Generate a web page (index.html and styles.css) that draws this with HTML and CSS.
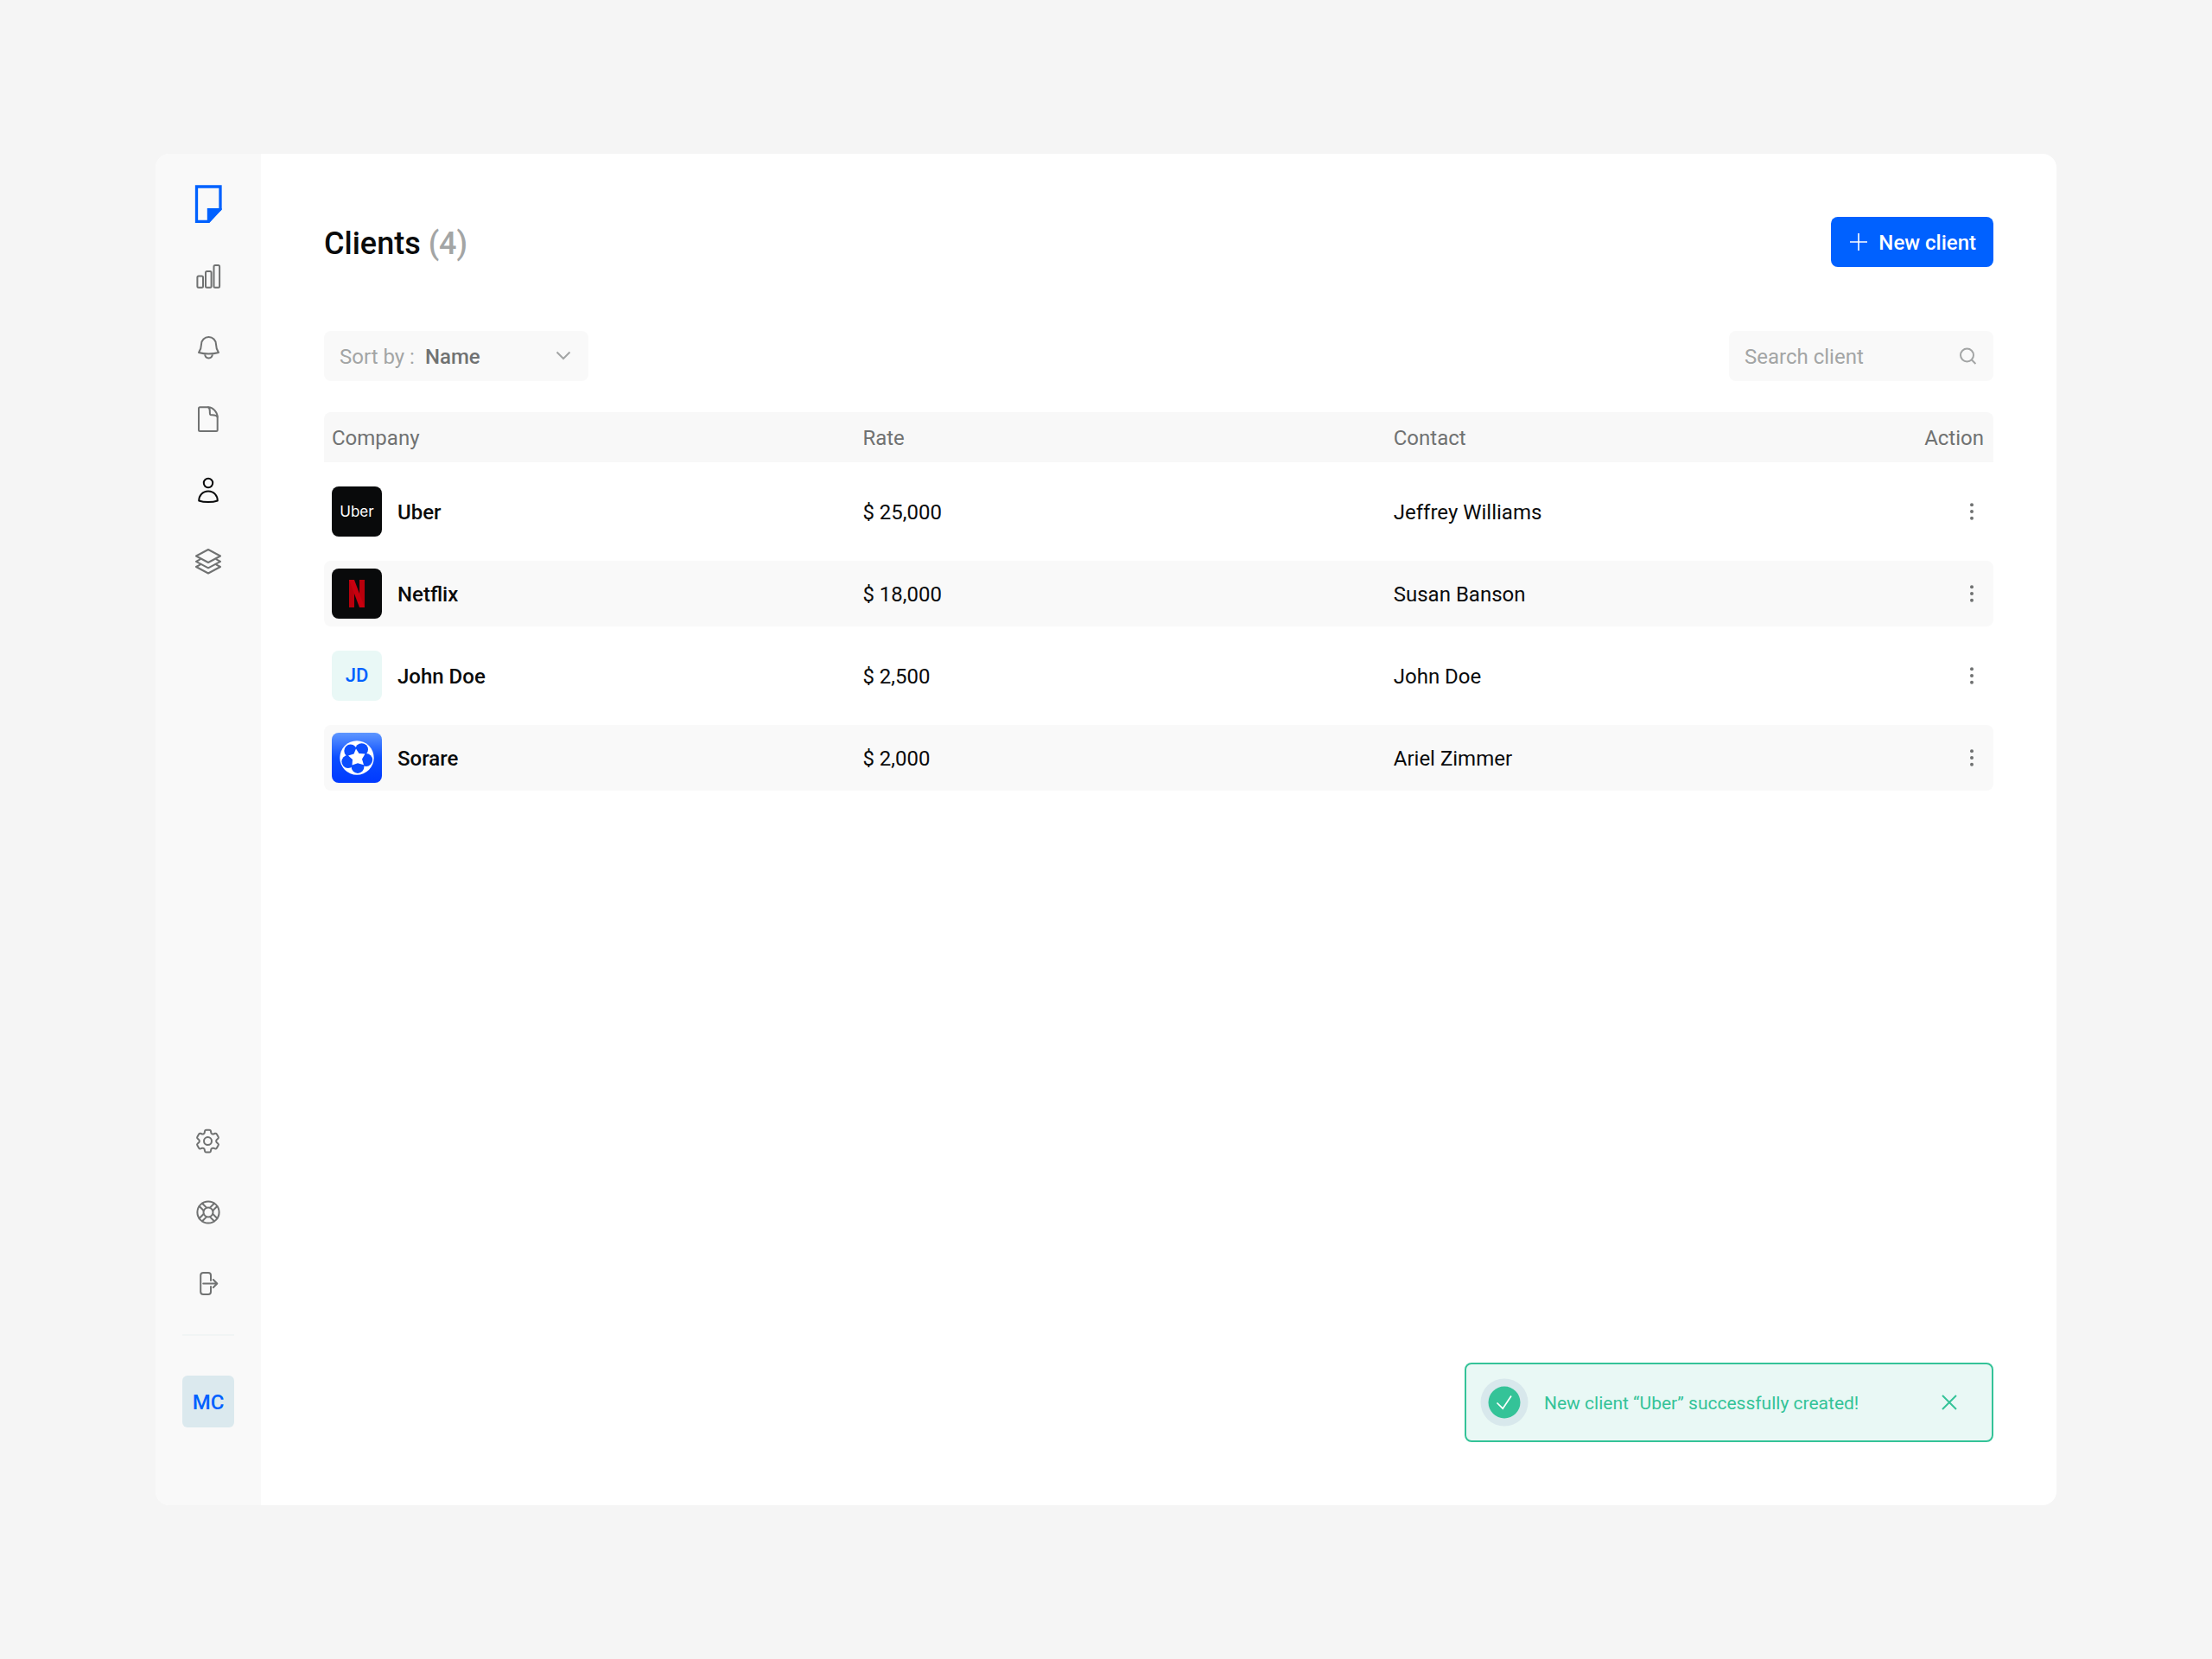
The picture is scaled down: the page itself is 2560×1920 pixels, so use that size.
FILE: index.html
```html
<!DOCTYPE html>
<html lang="en">
<head>
<meta charset="utf-8">
<meta name="viewport" content="width=device-width, initial-scale=1">
<title>Clients</title>
<link rel="stylesheet" href="styles.css">
</head>
<body>
<div class="app">
  <aside class="sidebar">
    <a class="logo" href="#" aria-label="Home">
      <svg width="32" height="44" viewBox="0 0 32 44"><path d="M2.500 2h27.500v26L16.500 42.300h-14z" fill="none" stroke="#0061ff" stroke-width="3.300"/><path d="M14.800 27H31.500v1.500L17 44h-2.200z" fill="#0061ff"/></svg>
    </a>
    <nav class="nav" aria-label="Main">
      <a href="#" aria-label="Statistics"><svg class="icon" viewBox="0 0 32 32"><rect x="3.400" y="14.600" width="6.600" height="13.200" rx="1.500"/><rect x="13" y="9" width="6.600" height="18.800" rx="1.500"/><rect x="22.500" y="2" width="6.600" height="25.800" rx="1.500"/></svg></a>
      <a href="#" aria-label="Notifications"><svg class="icon" viewBox="0 0 32 32"><path d="M16.500 3A8.500 8.500 0 0 0 8 11.500c0 4.500-1 6.500-3 9.500 3.500 1 7.500 1.500 11.500 1.500s8-.5 11.500-1.500c-2-3-3-5-3-9.500A8.500 8.500 0 0 0 16.500 3zM12 22.500c.3 3.400 2 5 4.500 5s4.200-1.600 4.500-5"/></svg></a>
      <a href="#" aria-label="Documents"><svg class="icon" viewBox="0 0 32 32"><path d="M6.500 2.200H16c5.500 0 10.700 5.800 10.700 11.500v14.800c0 .9-.6 1.500-1.500 1.500H6.500c-.9 0-1.500-.6-1.500-1.500V3.700c0-.9.600-1.500 1.500-1.500z"/><path d="M16 2.300c1.800.9 1.800 2.700 1.800 4.200 0 4 0 4.700 2 4.700 3.200 0 5.600-.2 6.800 2.300"/></svg></a>
      <a class="active" href="#" aria-label="Clients" aria-current="page"><svg class="icon" viewBox="0 0 32 32"><circle cx="16" cy="8" r="5.200"/><path d="M5.200 28.500c0-5.500 4-11 10.800-11s10.800 5.500 10.800 11c-6 2.100-15.600 2.100-21.600 0z"/></svg></a>
      <a href="#" aria-label="Projects"><svg class="icon" viewBox="0 0 32 32"><path d="M16 3l14 7.500L16 18 2 10.500zM6.500 14.300L2 16.800l14 7.500 14-7.500-4.500-2.500M6.500 20.600L2 23l14 7.500L30 23l-4.500-2.400"/></svg></a>
    </nav>
    <nav class="nav nav-bottom" aria-label="Account">
      <a href="#" aria-label="Settings"><svg class="icon" viewBox="0 0 32 32"><g transform="translate(-1.780 -1.680) scale(1.440)"><path stroke-width="1.390" d="M9.594 3.940c.09-.542.56-.94 1.110-.94h2.593c.55 0 1.020.398 1.110.94l.213 1.281c.063.374.313.686.645.87.074.04.147.083.22.127.325.196.72.257 1.075.124l1.217-.456a1.125 1.125 0 0 1 1.370.49l1.296 2.247a1.125 1.125 0 0 1-.26 1.431l-1.003.827c-.293.241-.438.613-.43.992a7.723 7.723 0 0 1 0 .255c-.008.378.137.75.43.991l1.004.827c.424.35.534.955.26 1.430l-1.298 2.247a1.125 1.125 0 0 1-1.369.491l-1.217-.456c-.355-.133-.75-.072-1.076.124a6.470 6.470 0 0 1-.22.128c-.331.183-.581.495-.644.869l-.213 1.281c-.09.543-.56.94-1.110.94h-2.594c-.55 0-1.019-.398-1.110-.94l-.213-1.281c-.062-.374-.312-.686-.644-.87a6.520 6.520 0 0 1-.22-.127c-.325-.196-.72-.257-1.076-.124l-1.217.456a1.125 1.125 0 0 1-1.369-.49l-1.297-2.247a1.125 1.125 0 0 1 .26-1.431l1.004-.827c.292-.24.437-.613.43-.991a6.932 6.932 0 0 1 0-.255c.007-.38-.138-.751-.43-.992l-1.004-.827a1.125 1.125 0 0 1-.26-1.430l1.297-2.247a1.125 1.125 0 0 1 1.370-.491l1.216.456c.356.133.751.072 1.076-.124.072-.044.146-.086.22-.128.332-.183.582-.495.644-.869l.214-1.280z"/></g><circle cx="15.500" cy="15.600" r="4.500"/></svg></a>
      <a href="#" aria-label="Help"><svg class="icon" viewBox="-16 -16 32 32"><circle r="12.600"/><circle r="5.500"/><path d="M-2.400-5.200v-7M2.400-5.200v-7" transform="rotate(45)"/><path d="M-2.400-5.200v-7M2.400-5.200v-7" transform="rotate(135)"/><path d="M-2.400-5.200v-7M2.400-5.200v-7" transform="rotate(225)"/><path d="M-2.400-5.200v-7M2.400-5.200v-7" transform="rotate(315)"/></svg></a>
      <a href="#" aria-label="Log out"><svg class="icon" viewBox="0 0 32 32"><path d="M19 13V7c0-1.700-1.300-3-3-3h-5.800c-1.700 0-3 1.300-3 3v19c0 1.700 1.300 3 3 3H16c1.700 0 3-1.300 3-3v-6M10.200 16.500h16M21.800 12l4.500 4.500-4.500 4.500"/></svg></a>
    </nav>
    <hr class="divider">
    <button class="profile" type="button">MC</button>
  </aside>

  <main class="main">
    <header class="header">
      <h1 class="title">Clients <span class="count">(4)</span></h1>
      <button class="new-client" type="button">
        <svg width="20" height="20" viewBox="0 0 20 20"><path d="M10 0v20M0 10h20" stroke="#fff" stroke-width="1.600"/></svg>
        <span class="label">New client</span>
      </button>
    </header>

    <div class="toolbar">
      <div class="field">
        <label for="sort">Sort by :</label>
        <select class="sort" id="sort"><option>Name</option><option>Rate</option><option>Contact</option></select>
        <svg width="18" height="12" viewBox="0 0 18 12"><path d="M1.500 1.500L9 9l7.500-7.500"/></svg>
      </div>
      <div class="field">
        <input class="search" type="search" placeholder="Search client" aria-label="Search client">
        <svg width="20" height="20" viewBox="0 0 20 20"><circle cx="9.500" cy="9" r="7.500"/><path d="M14.700 14.300l4.700 4.700"/></svg>
      </div>
    </div>

    <table class="clients">
      <thead>
        <tr><th class="col">Company</th><th class="col">Rate</th><th class="col">Contact</th><th class="action">Action</th></tr>
      </thead>
      <tbody>
        <tr>
          <td><div class="company"><span class="tile tile-uber">Uber</span><span class="label">Uber</span></div></td>
          <td class="text">$ 25,000</td><td class="text">Jeffrey Williams</td>
          <td class="action"><button class="more" type="button" aria-label="Actions for Uber"><svg width="6" height="20" viewBox="0 0 6 20"><circle cx="3" cy="2.300" r="2"/><circle cx="3" cy="10" r="2"/><circle cx="3" cy="17.700" r="2"/></svg></button></td>
        </tr>
        <tr>
          <td><div class="company"><span class="tile tile-netflix"><svg width="18" height="32" viewBox="0 0 18 32"><path d="M0 0h6v32H0zM12 0h6v32h-6z" fill="#b8000c"/><path d="M0 0h6l12 32h-6z" fill="#c8000f"/></svg></span><span class="label">Netflix</span></div></td>
          <td class="text">$ 18,000</td><td class="text">Susan Banson</td>
          <td class="action"><button class="more" type="button" aria-label="Actions for Netflix"><svg width="6" height="20" viewBox="0 0 6 20"><circle cx="3" cy="2.300" r="2"/><circle cx="3" cy="10" r="2"/><circle cx="3" cy="17.700" r="2"/></svg></button></td>
        </tr>
        <tr>
          <td><div class="company"><span class="tile tile-jd">JD</span><span class="label">John Doe</span></div></td>
          <td class="text">$ 2,500</td><td class="text">John Doe</td>
          <td class="action"><button class="more" type="button" aria-label="Actions for John Doe"><svg width="6" height="20" viewBox="0 0 6 20"><circle cx="3" cy="2.300" r="2"/><circle cx="3" cy="10" r="2"/><circle cx="3" cy="17.700" r="2"/></svg></button></td>
        </tr>
        <tr>
          <td><div class="company"><span class="tile tile-sorare"><svg width="40" height="40" viewBox="-20 -20 40 40"><circle r="19.700" fill="#fff"/><g fill="#0a4dff"><circle r="7.400" cx="5.600" cy="-9.400"/><circle r="7.400" cx="10.700" cy="2.500"/><circle r="7.400" cx="1" cy="10.600"/><circle r="7.400" cx="-10.200" cy="4.500"/><circle r="7.400" cx="-7.300" cy="-8.100"/></g><path fill="#fff" d="M-1-10.500L2.500-5 9.500-4.500 6 1.500 8 8.200 1 6.300-5.500 8.500-5 2-10-2.500-3.500-4.500z"/></svg></span><span class="label">Sorare</span></div></td>
          <td class="text">$ 2,000</td><td class="text">Ariel Zimmer</td>
          <td class="action"><button class="more" type="button" aria-label="Actions for Sorare"><svg width="6" height="20" viewBox="0 0 6 20"><circle cx="3" cy="2.300" r="2"/><circle cx="3" cy="10" r="2"/><circle cx="3" cy="17.700" r="2"/></svg></button></td>
        </tr>
      </tbody>
    </table>

    <div class="toast" role="status">
      <svg width="56" height="56" viewBox="0 0 56 56"><circle cx="28" cy="28" r="27.500" fill="#d8e8ec"/><circle cx="28" cy="28" r="18.500" fill="#34c398"/><path d="M19.500 28.500l6.700 6.700L36 20.500" fill="none" stroke="#fff" stroke-width="1.700"/></svg>
      <p class="toast-text">New client “Uber” successfully created!</p>
      <button class="toast-close" type="button" aria-label="Dismiss"><svg width="18" height="18" viewBox="0 0 18 18"><path d="M1 1l16 16M17 1L1 17" stroke="#34c398" stroke-width="2"/></svg></button>
    </div>
  </main>
</div>
</body>
</html>
```
FILE: styles.css
```css
* {
  box-sizing: border-box;
}

body {
  margin: 0;
  padding: 178px 180px;
  background: #f5f5f5;
  color: #0a0b0c;
  font: 400 24px/28px Roboto, "Liberation Sans", sans-serif;
}

button,
input,
select {
  margin: 0;
  padding: 0;
  border: 0;
  background: none;
  color: inherit;
  font: inherit;
}

svg {
  display: block;
  flex: none;
}

.app {
  display: flex;
  min-height: calc(100vh - 356px);
  border-radius: 16px;
  background: #fff;
  overflow: hidden;
}

.label {
  padding-top: 2px;
}

/* Sidebar */

.sidebar {
  display: flex;
  flex: none;
  flex-direction: column;
  align-items: center;
  width: 122px;
  padding: 36px 0 90px;
  background: #f9f9f9;
}

.nav {
  display: flex;
  flex-direction: column;
  gap: 50px;
  margin-top: 47px;
}

.nav-bottom {
  margin-top: auto;
}

.nav a {
  color: #707272;
}

.nav .active {
  color: #0a0b0c;
}

.icon {
  width: 32px;
  height: 32px;
  fill: none;
  stroke: currentColor;
  stroke-width: 2;
  stroke-linecap: round;
  stroke-linejoin: round;
}

.divider {
  width: 60px;
  height: 2px;
  margin: 43px 0 46px;
  border: 0;
  background: #f1f5f5;
}

.profile {
  width: 60px;
  height: 60px;
  padding-top: 2px;
  border-radius: 6px;
  background: #dbe9ee;
  color: #0061ff;
  font-weight: 500;
}

/* Content */

.main {
  display: flex;
  flex: 1;
  flex-direction: column;
  min-width: 0;
  padding: 73px;
}

.header,
.toolbar {
  display: flex;
  align-items: center;
  justify-content: space-between;
}

.title {
  margin: 0;
  padding-top: 4px;
  font-size: 36px;
  font-weight: 500;
  line-height: 42px;
}

.count {
  color: #a3a5a5;
}

.new-client {
  display: flex;
  align-items: center;
  gap: 13px;
  height: 58px;
  padding: 0 20px 0 22px;
  border-radius: 8px;
  background: #0061ff;
  color: #fff;
  font-weight: 500;
}

.toolbar {
  margin-top: 74px;
}

.field {
  display: flex;
  align-items: center;
  gap: 12px;
  width: 306px;
  height: 58px;
  padding: 0 20px 0 18px;
  border-radius: 8px;
  background: #f9f9f9;
  color: #a3a5a5;
}

.field svg {
  fill: none;
  stroke: #a3a5a5;
  stroke-width: 2;
}

.sort,
.search {
  flex: 1;
  min-width: 0;
  height: 58px;
  padding-top: 2px;
  outline: 0;
  appearance: none;
}

.field label {
  padding-top: 2px;
}

.sort {
  color: #707272;
  font-weight: 500;
}

.search::placeholder {
  color: #a3a5a5;
  opacity: 1;
}

/* Client list */

.clients {
  width: 100%;
  margin-top: 17px;
  border-spacing: 0 19px;
  table-layout: fixed;
}

.clients th {
  height: 58px;
  padding: 2px 9px 0;
  background: #f8f8f8;
  color: #707272;
  font-weight: 400;
  text-align: left;
}

.clients .col {
  width: 31.8%;
}

.clients th:first-child {
  border-top-left-radius: 8px;
}

.clients th:last-child {
  border-top-right-radius: 8px;
}

.clients td {
  height: 76px;
  padding: 0 9px;
}

.clients .text {
  padding-top: 2px;
}

.clients tr:nth-child(even) td {
  background: #f9f9f9;
}

.clients td:first-child {
  border-radius: 8px 0 0 8px;
}

.clients td:last-child {
  border-radius: 0 8px 8px 0;
}

.clients .action {
  padding-right: 11px;
  padding-left: 0;
  text-align: right;
}

.company {
  display: flex;
  align-items: center;
  gap: 18px;
  font-weight: 500;
}

.tile {
  display: flex;
  flex: none;
  align-items: center;
  justify-content: center;
  width: 58px;
  height: 58px;
  border-radius: 8px;
  background: #090a0b;
}

.tile-uber {
  color: #fff;
  font-family: Inter, sans-serif;
  font-size: 17px;
  font-weight: 400;
}

.tile-jd {
  background: #e9f8f6;
  color: #0061ff;
  font-size: 22px;
}

.tile-sorare {
  background: linear-gradient(#5f97ff, #0a4dff 50%, #0039ff);
}

.more {
  display: flex;
  align-items: center;
  justify-content: center;
  width: 28px;
  height: 28px;
  margin-left: auto;
  fill: #707272;
}

/* Notification */

.toast {
  display: flex;
  align-items: center;
  align-self: flex-end;
  width: 612px;
  height: 92px;
  margin-top: auto;
  padding: 0 31px 0 16px;
  border: 2px solid #34c398;
  border-radius: 8px;
  background: #e9f8f5;
  color: #34c398;
}

.toast-text {
  flex: 1;
  margin: 0;
  padding: 2px 0 0 18px;
  font-size: 21px;
}

.toast-close {
  display: flex;
  align-items: center;
  justify-content: center;
  width: 36px;
  height: 36px;
}
```
